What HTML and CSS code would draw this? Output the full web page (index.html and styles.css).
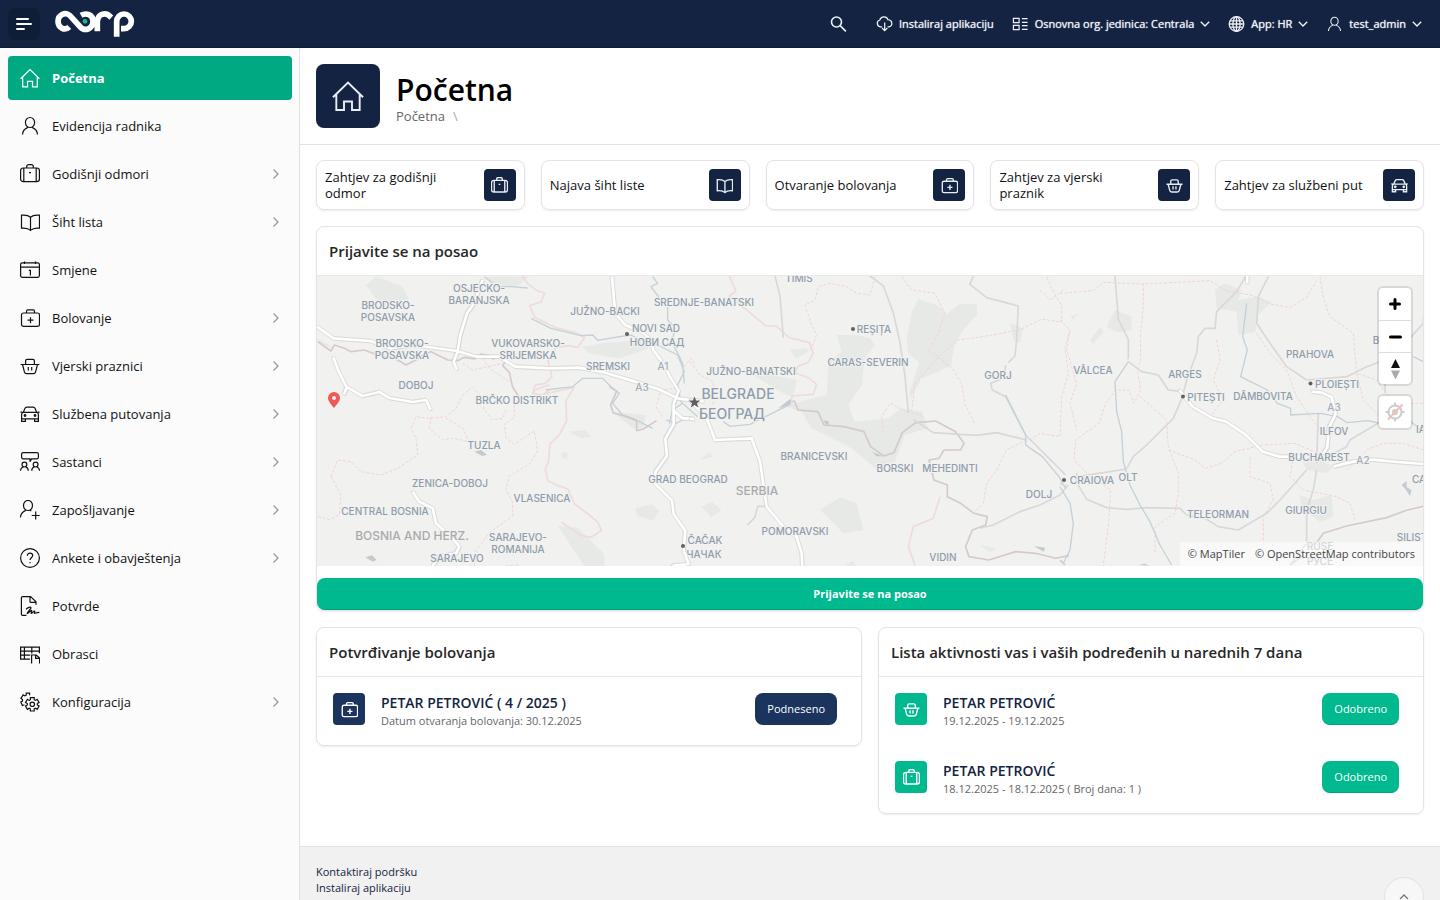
FILE: index.html
```html
<!DOCTYPE html>
<html lang="hr">
<head>
<meta charset="utf-8">
<title>Početna</title>
<meta name="viewport" content="width=device-width, initial-scale=1">
<link rel="stylesheet" href="styles.css">
</head>
<body>
<svg class="sprite" aria-hidden="true">
  <symbol id="i-home" viewBox="0 0 20 20"><path d="M.6 10.8 10 1.6l9.4 9.2M2.7 8.8v10h4.8v-5.4h5v5.4h4.8v-10"/></symbol>
  <symbol id="i-user" viewBox="0 0 20 20"><ellipse cx="10" cy="6.5" rx="4.6" ry="5"/><path d="M2.5 18.6c0-4.2 2-5.6 5.4-7.2M17.5 18.6c0-4.2-2-5.6-5.4-7.2"/></symbol>
  <symbol id="i-case" viewBox="0 0 20 20"><rect x=".6" y="4" width="18.8" height="13.6" rx="2.6"/><path d="M3.8 4v13.6M16.2 4v13.6M6.7 4V2.6a2 2 0 0 1 2-2h2.6a2 2 0 0 1 2 2V4M9 8.6h2"/></symbol>
  <symbol id="i-book" viewBox="0 0 20 20"><path d="M1.5 3.2c3.4-.4 7 .2 9 2 2-1.8 5.5-2.4 9-2v13c-3.5-.4-7 .2-9 2.2-2-2-5.6-2.6-9-2.2zM10.5 5.2v13"/></symbol>
  <symbol id="i-cal" viewBox="0 0 20 20"><rect x=".6" y="2.8" width="18.8" height="14.5" rx="1.8"/><path d="M.6 7.2h18.8M4.500 1.400V4M15.500 1.400V4M8.800 10.400h1.600v5"/></symbol>
  <symbol id="i-aid" viewBox="0 0 20 20"><rect x="1.500" y="5" width="18" height="13.400" rx="2"/><path d="M6.500 5V3.400c0-.9.500-1.500 1.400-1.500h5.200c.9 0 1.400.6 1.400 1.500V5M10.500 9.200v6M7.500 12.200h6"/></symbol>
  <symbol id="i-basket" viewBox="0 0 20 20"><path d="M.6 8.500h18.800M2.500 8.500l1.900 7.300c.3 1.200 1 1.900 2.200 1.900h6.800c1.200 0 1.900-.7 2.200-1.900l1.900-7.300M5.600 8.500V5c0-1 .7-1.700 1.700-1.700h5.400c1 0 1.700.7 1.700 1.700v3.500M8.300 11v3.600M11.700 11v3.600"/></symbol>
  <symbol id="i-car" viewBox="0 0 20 20"><path d="M.4 8.200h1.800M17.800 8.200h1.800M3.200 8.400 5 4.300c.4-.8.900-1.200 1.700-1.200h6.600c.8 0 1.300.4 1.700 1.200l1.800 4.100zM3.200 8.400C2 8.800 1.600 9.500 1.600 10.600v6.800h3.800v-2.600h9.200v2.600h3.800v-6.800c0-1.100-.4-1.800-1.600-2.200M1.600 14.800h3.800M14.600 14.800h3.800"/><circle cx="5" cy="11.500" r=".8"/><circle cx="15" cy="11.500" r=".8"/></symbol>
  <symbol id="i-meet" viewBox="0 0 20 20"><path d="M3.200.7h13.600c1 0 1.600.6 1.600 1.600v3c0 1-.6 1.600-1.600 1.600h-5.300L10 9.800V6.900H3.200c-1 0-1.600-.6-1.600-1.600v-3c0-1 .6-1.600 1.600-1.600zM.5 18.800c0-2.600.9-3.300 2.700-4.100M8.300 18.800c0-2.600-.9-3.300-2.600-4.100M11.700 18.800c0-2.600.9-3.300 2.600-4.100M19.500 18.800c0-2.600-.9-3.300-2.700-4.100"/><circle cx="4.400" cy="12.600" r="2.400"/><circle cx="15.600" cy="12.600" r="2.400"/></symbol>
  <symbol id="i-plus" viewBox="0 0 20 20"><ellipse cx="8" cy="5.500" rx="4.500" ry="5"/><path d="M.5 17.600c0-4.200 1.700-5.600 5.200-7.200M10 10.200l1.300.8M15.700 11.500v8M11.700 15.500h8"/></symbol>
  <symbol id="i-help" viewBox="0 0 20 20"><circle cx="10" cy="10" r="9.400"/><path d="M7.300 7.700C7.300 6.100 8.400 5.200 10 5.200s2.700.9 2.700 2.400c0 2-2.700 2.300-2.700 4.300M10 14v1.200"/></symbol>
  <symbol id="i-sign" viewBox="0 0 20 20"><path d="M6.500 19.400H2.600c-.8 0-1.200-.4-1.200-1.200V1.800c0-.8.400-1.200 1.200-1.200h8l5.400 5.200v3M10 1v4.400c0 .6.300.9.900.9h4.600M6 13.400c1.800-2 4.600-2.800 5-1.800.3.900-3.800 5-3.800 5.800s3.400-3 4.300-3-.9 3-.2 3 2.300-2.400 3.200-2.400-.7 2.200 0 2.400 3-1.400 4.900-1"/></symbol>
  <symbol id="i-form" viewBox="0 0 20 20"><path d="M10 15.200H.6v-12h18.800v6M.6 7.200h18.800M.6 11.200h9.600M4.400 3.200v12M11.800 3.200v6.200M11.600 19.600V11h4.600l3.400 3v5.600M15.600 11v3.400h4"/></symbol>
  <symbol id="i-gear" viewBox="0 0 20 20"><path d="M10.400 5.600h3.800v2.100l1.200.7 1.800-1.100 1.900 3.300-1.800 1v1.400l1.800 1-1.900 3.300-1.800-1.100-1.200.7V19h-3.800v-2.100l-1.200-.7-1.800 1.100L5.500 14l1.800-1v-1.400l-1.800-1 1.900-3.300 1.800 1.100 1.200-.7zM9.600 3.300V1.200H6.200v2l-1.300.7L3.200 2.900.9 6.300l1.600 1.200v1.600l-1.700 1 1.600 3.400 2-.7"/><circle cx="12.300" cy="12.300" r="2.200"/></symbol>
  <symbol id="i-right" viewBox="0 0 8 12"><path d="m1.500 1.500 4.500 4.500-4.500 4.500"/></symbol>
  <symbol id="i-down" viewBox="0 0 10 8"><path d="m.8 1.800 4.200 4.200 4.200-4.200"/></symbol>
  <symbol id="i-search" viewBox="0 0 16 16"><circle cx="6" cy="6" r="5"/><path d="m9.600 9.600 5.800 5.800"/></symbol>
  <symbol id="i-cloud" viewBox="0 0 18 16"><path d="M6.400 11H4.600A3.700 3.700 0 0 1 4 3.800 4.600 4.600 0 0 1 12.800 3.500a3.800 3.800 0 0 1 1 7.500h-1.600M9.200 6.500v8.300M6.400 12.300l2.800 2.700 2.800-2.700"/></symbol>
  <symbol id="i-org" viewBox="0 0 18 16"><path d="M1.500 2h6v4.500h-6zM1.500 9.500h6V14h-6zM10.500 2.300h6M10.500 6.300h6M10.500 9.800h6M10.500 13.700h6"/></symbol>
  <symbol id="i-globe" viewBox="0 0 16 16"><circle cx="8" cy="8" r="7.300"/><ellipse cx="8" cy="8" rx="3.600" ry="7.300"/><path d="M8 .7v14.600M1.600 4.800h12.800M.7 8h14.600M1.600 11.200h12.800"/></symbol>
</svg>

<header class="topbar">
  <button class="menu-button" type="button" aria-label="Izbornik">
    <svg viewBox="0 0 16 14"><path d="M1 2h11M1 7h14M1 12h7"/></svg>
  </button>
  <a class="brand" href="#" aria-label="Početna stranica">
    <svg viewBox="160 30 243 84"><path d="M206 81C192 94 172 83 172 64c0-19 21-30 36-17l31 34c14 15 38 5 38-17 0-20-20-27-36-18M290 94V66c0-20 17-29 32-22l10 9M348 110V64c0-12 10-22 22-22s22 10 22 22-10 22-22 22h-9"/><circle cx="253" cy="64" r="7"/></svg>
  </a>
  <nav class="tools" aria-label="Alati">
    <button class="tool search" type="button" aria-label="Traži"><svg><use href="#i-search"/></svg></button>
    <button class="tool" type="button"><svg><use href="#i-cloud"/></svg>Instaliraj aplikaciju</button>
    <button class="tool" type="button"><svg><use href="#i-org"/></svg>Osnovna org. jedinica: Centrala<svg class="down"><use href="#i-down"/></svg></button>
    <button class="tool" type="button"><svg><use href="#i-globe"/></svg>App: HR<svg class="down"><use href="#i-down"/></svg></button>
    <button class="tool" type="button"><svg><use href="#i-user"/></svg>test_admin<svg class="down"><use href="#i-down"/></svg></button>
  </nav>
</header>

<div class="shell">
  <nav class="sidebar" aria-label="Glavni izbornik">
    <a class="nav-item active" href="#"><svg class="icon"><use href="#i-home"/></svg><span>Početna</span></a>
    <a class="nav-item" href="#"><svg class="icon"><use href="#i-user"/></svg><span>Evidencija radnika</span></a>
    <a class="nav-item" href="#"><svg class="icon"><use href="#i-case"/></svg><span>Godišnji odmori</span><svg class="right"><use href="#i-right"/></svg></a>
    <a class="nav-item" href="#"><svg class="icon"><use href="#i-book"/></svg><span>Šiht lista</span><svg class="right"><use href="#i-right"/></svg></a>
    <a class="nav-item" href="#"><svg class="icon"><use href="#i-cal"/></svg><span>Smjene</span></a>
    <a class="nav-item" href="#"><svg class="icon"><use href="#i-aid"/></svg><span>Bolovanje</span><svg class="right"><use href="#i-right"/></svg></a>
    <a class="nav-item" href="#"><svg class="icon"><use href="#i-basket"/></svg><span>Vjerski praznici</span><svg class="right"><use href="#i-right"/></svg></a>
    <a class="nav-item" href="#"><svg class="icon"><use href="#i-car"/></svg><span>Službena putovanja</span><svg class="right"><use href="#i-right"/></svg></a>
    <a class="nav-item" href="#"><svg class="icon"><use href="#i-meet"/></svg><span>Sastanci</span><svg class="right"><use href="#i-right"/></svg></a>
    <a class="nav-item" href="#"><svg class="icon"><use href="#i-plus"/></svg><span>Zapošljavanje</span><svg class="right"><use href="#i-right"/></svg></a>
    <a class="nav-item" href="#"><svg class="icon"><use href="#i-help"/></svg><span>Ankete i obavještenja</span><svg class="right"><use href="#i-right"/></svg></a>
    <a class="nav-item" href="#"><svg class="icon"><use href="#i-sign"/></svg><span>Potvrde</span></a>
    <a class="nav-item" href="#"><svg class="icon"><use href="#i-form"/></svg><span>Obrasci</span></a>
    <a class="nav-item" href="#"><svg class="icon"><use href="#i-gear"/></svg><span>Konfiguracija</span><svg class="right"><use href="#i-right"/></svg></a>
  </nav>

  <main class="main">
    <div class="page-head">
      <div class="page-icon"><svg><use href="#i-home"/></svg></div>
      <div class="page-title">
        <h1>Početna</h1>
        <p class="crumbs"><a href="#">Početna</a><span>\</span></p>
      </div>
    </div>

    <div class="content">
      <div class="shortcuts">
        <a class="shortcut" href="#"><span>Zahtjev za godišnji odmor</span><span class="tile"><svg><use href="#i-case"/></svg></span></a>
        <a class="shortcut" href="#"><span>Najava šiht liste</span><span class="tile"><svg><use href="#i-book"/></svg></span></a>
        <a class="shortcut" href="#"><span>Otvaranje bolovanja</span><span class="tile"><svg><use href="#i-aid"/></svg></span></a>
        <a class="shortcut" href="#"><span>Zahtjev za vjerski praznik</span><span class="tile"><svg><use href="#i-basket"/></svg></span></a>
        <a class="shortcut" href="#"><span>Zahtjev za službeni put</span><span class="tile"><svg><use href="#i-car"/></svg></span></a>
      </div>

      <section class="card">
        <h2>Prijavite se na posao</h2>
        <div class="map">
          <svg class="map-canvas" viewBox="317 276 1106 290" preserveAspectRatio="xMidYMid slice" role="img" aria-label="Karta">
            <g transform="translate(316 270) scale(.3333)">
              <path class="land" d="M150 45l30-25 80 30 20 40-30 20-60-10zM5 205l50 30-50-15zM800 230l60-10 110-10 30 25-90 30-90-15zM510 20h130l-40 30-70-5zM725 768l60 5 80 80v35h-60zM958 715l50-12 22 20-20 30-48-18zM757 485l50-5 20 20-30 5zM890 425l100 10-10 40-30 0zM738 545l18 5-5 18-15-8z"/>
              <path class="lake" d="M475 545l20-5 18 14-14 4zM148 862l20-6 14 14-12 5z"/>
              <path class="border" d="M5 215l40 28 10-18 30 10 20 10 40-5 40 15 60 15 25 15 40-20 10-10 25-10 20 10 30 15 30 2 20-10 30 5 20-15 25 5 10 10 20-5 20 10-10 15 20 20 10 45 20 30"/>
              <path class="border soft" d="M620 18l14 22 26 20 26 10-10 25-35 12 15 35 60 30 60 15 30 15-20 30-30-5-35 5-25 40 12 48-20 20-30 5-8 25 30 5 20-15M700 375l-50 10 5-25 45-15M685 372l90-20-25 40 2 60-20 40-30 30-4 50-10 25 8 35 30 15 30 10 20 45 40 30 30 25 10 25-30 20-30-5-60-40"/>
              <path class="region" d="M45 620l20-50 40 5 30 30 60 10 50-20 60-40-5-50-15-30 15-35 40 5 50-5 30-25 20-40 30-25 25 30 10 40 25 30 30-5 10-25M345 440l-5 35 40 35 30-5 50 10-20-40-50-30M500 265l20 30 60 40M440 280l30 20 90-20M45 620l30 55-5 60-30 14-36-10M475 888l5-45 40-55 70-50 0-40-20-40 10-40 60-35 25-40-10-60-60 40-25-20-5-40 30-20 0-50M1040 440l-20-30 15-50 50-5M1105 290l20-25 15 20M570 888l40-4"/>
              <path class="river" d="M505 20l40 30 40 0 50 4M645 145l60 30 90 22 35-2 15 16 60-10 40-6 40 20 40 10 60 30 20 50-20 40 10 50 50 45M1010 20l15 20-20 10 30 40 20 20 0 40 20 20-5 50 30 60 5 60M690 360l80-10 30-25 60 0 25 25 25 20-20 30 30 35 30 10 60 30M1060 460l10-40 30-20M1050 450l30 10 20-10"/>
              <path class="border" d="M880 350l22 14-18 40 8 25 30 8 40 15 0 30 20-5 40-25"/>
              <path class="road" d="M3 170l50 35 110 8 60 22 70-10 130 18 60 17 65 0 50 30 110 5 80-2 80 15 100 30 60 20 60 28 75 8M425 245l8-50 20-65 22-30 10-30 15-40M425 245l-12 30 10 25M52 262l15 40 25 50-8 22M90 350l50 28 50-12 30 18 70 12 40-6 14 30M888 20l10 110 30 35 50 22 25 20 10 35 30 40 20 40 25 40-15 40 0 60-25 45 5 50-35 50 0 35 50 50 5 40 35 50-5 60 15 40-45 5-10 10M1070 420l30 25 30 0M290 665l20 30 40 20 10 45 50 45 20 25-10 20-50 10-20 28"/>
            </g>
            <g transform="translate(690 270) scale(.3333)">
              <path class="land" d="M685 87l60 20 25 25 40-30 50 0 3 30-45 50-25 45-10 60-90 40-30 60-5-20 30-90-33-25-5-45 15-80zM500 195l40 10 15 20-30 40-10 80-40 60 20 50 100-10 40-30 60 10 20 50-70 20-30 80-60 20-70-60-60-30-60-30-30-50-50-15 60-20 65-15 5-100 40-30-15-50zM320 330l-10 50-30-10-100-60 40 0zM960 160l40 15-10 45-20-10zM390 720l60-38 50 18 20 80-60 10-30-30zM35 710l30-15 30 25-30 22zM300 240l50-5 5 10-35 20zM30 570l30-25 8 15zM460 885l30-12 8 14zM870 825l50 10-20 12z"/>
              <path class="lake" d="M265 415l35-28 12 8-20 14zM400 450l18 5-8 14zM1032 828l34 5-5 12zM545 545l35 14-20 0z"/>
              <path class="border" d="M312 390l12 30 60 5 18 40 60 5 60 15 20 45 40 28 30-10 25-60 40-30 60-5 60 32 25 35-10 20-50 0-15 25-30 5 15 60 40 15 0 35 40 20 40 30 40 10-5 25-40 15-20 50 10 30 60 10 80-25 60 5 60 15 40-8"/>
              <path class="border soft" d="M118 18l20 45-20 15 50 40 60 50 30 0 40 35 60 15 12 30-15 30-30 10-10 20 40 15 25 20-10 30-65 5 0 30M750 680l-20 65-60 25-15 60 20 55"/>
              <path class="region" d="M555 20l-15 55-40-5-30-20-50-10-35 10-10 40-30 15 20 60 15 30-20 50M0 275l30 40 40 20 0 70M635 20l30 40 70 10 30 60-20 60-30 50 30 20 60-50 60-8 60-10 70-15 60-30 60 10 0-50-30-50-20-50M745 262l-70 80-10 80M745 262l40 30 30 50 10 60 30 60M580 490l-5-50 25-40 40 20 60 20M1010 510l-60 30-30 60-30 40-10 60-30 30M1020 510l30-20 60 10 5-120 20-70-10-80 15-50M1050 60l30 30 40-30"/>
              <path class="way" d="M255 18l15 60 10 125M540 18l40 30 30 80 20 90 15 100 10 110M850 18l-10 25 50 40 95 25-5 100-5 50-20 20M947 285l-5 40-40 15 5 20 40 20 60 115 80 80 40 40M670 448l60 40 130 8 60-8 90 22M870 775l40-10 80-40 60-20 60-30 25-30M232 710l-28-2-10 35-22 22"/>
              <path class="river" d="M947 375l60 120 0 30 50 35 50 60 20 35M100 455l20 14 60-6 60-30 60-30"/>
              <path class="road" d="M0 390l50 55 25 65 110-5 25 70 20 135 50 60 40 30 15 50 2 40M0 445l12 4"/>
            </g>
            <g transform="translate(1060 270) scale(.3333)">
              <path class="land" d="M465 60l30-20 50 20-10 30 60-10 40 15-40 40-10 50-50 10-5-70-60-10zM165 120l50 20 0 40-40 8-35-18zM90 210l30-38 10 15-30 35zM30 140l25-12-15 22zM720 675l40 15 55-15 5 65-40 15-55-40zM720 560l60 10 40 20-20 20-60-10z"/>
              <path class="lake" d="M1025 645l15-12 0 18 15 10-5 18-12-20zM235 885l20-4 12 6z"/>
              <path class="region" d="M0 70l100-8 30-25 120 5 200-10 50 30 80 15 50 25 60 10 50-30 30-50M250 40l0 70-8 80 0 80-10 30 10 60-20 40-15-40-40 0-30 40-20 60-70 50-5 60 40 40 70 50-5 90-20 160M240 380l80 70 5 80 30 80 0 60-10 60-60 40 0 80M470 210l10 60-20 60 30 60-40 50M325 540l80 30 30 25 50-15 40-35 80-20 100-5 70 30M590 190l40 60 50 50 30 80 40 60 50 60 10 40M780 20l10 60 20 60 70 50 10 120 60 20 50 70 90 0M890 310l20 80 50 50M700 560l-10 60 40 40 100 20 40 20 15 50M570 560l0 60 60 20 10 50-30 50 0 80M1090 540l-60-20-60 0-50 20-60 60M0 150l30 30-10 60 30 100-20 60 20 80"/>
              <path class="way" d="M165 18l10 130 30 60 0 60M205 275l40 30 50 10 30 45 40 5M370 375l-30 70-80 80-40 35-20 35M370 370l10-40 30-80 5-50 20-25 30 0 5-50 60-60 30-50M625 20l-30 60-5 80 40 60 50 70 60 40M740 330l120-10 60-30 80-30 90-100 0-15M775 430l-5 150M740 600l-80 90-40 40-85 50-60-10-40-25-55-10-20-20-100-2-60 5-60-5-60-25-30-50 0-30M770 600l-10 60-20 60 0 100-50 65M50 620l100-15 50-8M0 640l20 10M975 340l0 30M970 450l-100 60-10 20-60 30"/>
              <path class="river" d="M205 275l-40 60 5 90 15 60 5 90 20 70 30 60 30 50 30 70 35 60M560 100l-12 100 14 40-20 80 80 40 30 40 40 15 0 20 90-5 50 10 30 18 60-6 50 10 60-25 60 50 50 20M0 650l30 50 10 60-10 80-20 40M1060 260l30 15"/>
              <path class="border" d="M765 825l25-35 70-22 120-25 60-22 50-12M690 885l40-30M0 870l15 15"/>
              <path class="road" d="M358 360l40 50 60 35 40 10 60 40 50 50 50 15 60 0M755 365l30 3 30 14 12 50-20 40-5 60-12 20M820 590l60-15 60-6 60 6 90 7M562 18l0 22"/>
            </g>
            <g class="labels">
              <text x="388" y="309">BRODSKO-</text><text x="388" y="321">POSAVSKA</text>
              <text x="479" y="292">OSJECKO-</text><text x="479" y="304">BARANJSKA</text>
              <text x="402" y="347">BRODSKO-</text><text x="402" y="359">POSAVSKA</text>
              <text x="528" y="347">VUKOVARSKO-</text><text x="528" y="359">SRIJEMSKA</text>
              <text x="605" y="315">JUŽNO-BACKI</text><text x="704" y="306">SREDNJE-BANATSKI</text>
              <text x="656" y="332">NOVI SAD</text><text x="657" y="346">НОВИ САД</text>
              <text x="608" y="370">SREMSKI</text><text x="416" y="389">DOBOJ</text>
              <text x="517" y="404">BRČKO DISTRIKT</text><text x="484" y="449">TUZLA</text>
              <text x="450" y="487">ZENICA-DOBOJ</text><text x="542" y="502">VLASENICA</text>
              <text x="385" y="515">CENTRAL BOSNIA</text>
              <text x="518" y="541">SARAJEVO-</text><text x="518" y="553">ROMANIJA</text>
              <text x="457" y="562">SARAJEVO</text><text x="799" y="282">TIMIS</text>
              <text x="751" y="375">JUŽNO-BANATSKI</text><text x="868" y="366">CARAS-SEVERIN</text>
              <text x="874" y="333">REȘIȚA</text><text x="998" y="379">GORJ</text>
              <text x="814" y="460">BRANICEVSKI</text><text x="895" y="472">BORSKI</text><text x="950" y="472">MEHEDINTI</text>
              <text x="688" y="483">GRAD BEOGRAD</text><text x="795" y="535">POMORAVSKI</text>
              <text x="705" y="544">ČAČAK</text><text x="704" y="558">ЧАЧАК</text>
              <text x="943" y="561">VIDIN</text><text x="1039" y="498">DOLJ</text>
              <text x="1092" y="484">CRAIOVA</text><text x="1128" y="481">OLT</text>
              <text x="1093" y="374">VÂLCEA</text><text x="1185" y="378">ARGES</text>
              <text x="1206" y="401">PITEȘTI</text><text x="1263" y="400">DÂMBOVITA</text>
              <text x="1310" y="358">PRAHOVA</text><text x="1337" y="388">PLOIEȘTI</text>
              <text x="1334" y="435">ILFOV</text><text x="1319" y="461">BUCHAREST</text>
              <text x="1218" y="518">TELEORMAN</text><text x="1306" y="514">GIURGIU</text>
              <text x="1376" y="344">B</text><text x="1421" y="433">IA</text><text x="1419" y="483">CA</text><text x="1412" y="541">SILIST</text>
              <text class="road-label" x="642" y="391">A3</text><text class="road-label" x="663" y="370">A1</text>
              <text class="road-label" x="1334" y="411">A3</text><text class="road-label" x="1363" y="464">A2</text>
              <text class="road-label" x="1320" y="550">RUSE</text><text class="road-label" x="1320" y="565">РУСЕ</text>
              <text class="big" x="738" y="399">BELGRADE</text><text class="big" x="732" y="419">БЕОГРАД</text>
              <text class="country" x="412" y="540">BOSNIA AND HERZ.</text><text class="country" x="757" y="495">SERBIA</text>
            </g>
            <g class="dots"><circle cx="627" cy="334" r="2"/><circle cx="853" cy="329" r="2"/><circle cx="683" cy="546" r="2"/><circle cx="1064" cy="480" r="2"/><circle cx="1183" cy="396.500" r="2"/><circle cx="1310.500" cy="383.500" r="2"/><path d="m694.500 396.500 1.600 4h4.200l-3.300 2.700 1.200 4.200-3.700-2.500-3.700 2.500 1.200-4.200-3.300-2.700h4.200z"/></g>
            <path class="pin" fill-rule="evenodd" d="M334 408c-2.500-3.500-6-6.500-6-10a6 6 0 0 1 12 0c0 3.500-3.500 6.500-6 10zm0-12a2 2 0 1 0 0 4 2 2 0 0 0 0-4z"/>
          </svg>
          <div class="map-tools">
            <div class="map-group">
              <button type="button" aria-label="Uvećaj"><svg viewBox="0 0 32 32"><path class="bar" d="M16 11.500v9M11.500 16h9"/></svg></button>
              <button type="button" aria-label="Umanji"><svg viewBox="0 0 32 32"><path class="bar" d="M11.500 16h10"/></svg></button>
              <button type="button" aria-label="Sjever"><svg viewBox="0 0 32 32"><path d="m12 15 4.500-9 4.500 9z"/><path class="south" d="m12 17.500 4.500 9 4.500-9z"/></svg></button>
            </div>
            <div class="map-group">
              <button type="button" aria-label="Moja lokacija" disabled><svg class="locate" viewBox="0 0 32 32"><circle cx="16" cy="16" r="6.500"/><circle class="core" cx="16" cy="16" r="3"/><path d="M16 6.500v3M16 22.500v3M6.500 16h3M22.500 16h3"/><path class="slash" d="m9 23.500 14.500-15"/></svg></button>
            </div>
          </div>
          <div class="attribution"><a href="#">© MapTiler</a><a href="#">© OpenStreetMap contributors</a></div>
        </div>
        <button class="checkin-button" type="button">Prijavite se na posao</button>
      </section>

      <div class="panels">
        <section class="card">
          <h2>Potvrđivanje bolovanja</h2>
          <div class="entry">
            <span class="tile blue"><svg><use href="#i-aid"/></svg></span>
            <div class="entry-text"><strong>PETAR PETROVIĆ ( 4 / 2025 )</strong><span>Datum otvaranja bolovanja: 30.12.2025</span></div>
            <button class="status blue" type="button">Podneseno</button>
          </div>
        </section>
        <section class="card">
          <h2>Lista aktivnosti vas i vaših podređenih u narednih 7 dana</h2>
          <div class="entry">
            <span class="tile green"><svg><use href="#i-basket"/></svg></span>
            <div class="entry-text"><strong>PETAR PETROVIĆ</strong><span>19.12.2025 - 19.12.2025</span></div>
            <button class="status green" type="button">Odobreno</button>
          </div>
          <div class="entry">
            <span class="tile green"><svg><use href="#i-case"/></svg></span>
            <div class="entry-text"><strong>PETAR PETROVIĆ</strong><span>18.12.2025 - 18.12.2025 ( Broj dana: 1 )</span></div>
            <button class="status green" type="button">Odobreno</button>
          </div>
        </section>
      </div>
    </div>

    <footer class="footer">
      <div class="footer-links">
        <a href="#">Kontaktiraj podršku</a>
        <a href="#">Instaliraj aplikaciju</a>
        <span>Powered by <b>ERPORM</b></span>
      </div>
      <button class="to-top" type="button" aria-label="Na vrh"><svg viewBox="0 0 10 8"><path d="m1 6 4-4 4 4"/></svg></button>
    </footer>
  </main>
</div>
</body>
</html>
```
FILE: styles.css
```css
* { box-sizing: border-box; }

body {
  margin: 0;
  height: 100vh;
  overflow: hidden;
  display: flex;
  flex-direction: column;
  background: #fff;
  color: #111;
  font: 13px/16px "Open Sans", "Noto Sans", sans-serif;
}

h1, h2, p { margin: 0; }
a { color: inherit; text-decoration: none; }
button { font: inherit; color: inherit; border: 0; padding: 0; background: none; cursor: pointer; }
svg { fill: none; stroke: currentColor; display: block; flex: none; }
.sprite { position: absolute; width: 0; height: 0; }

/* Top bar */
.topbar {
  flex: none;
  display: flex;
  align-items: center;
  height: 48px;
  padding: 0 18px 0 8px;
  background: #132341;
  box-shadow: inset 0 -1px #0f1c34;
  color: #eef1f6;
}
.menu-button {
  display: grid;
  place-items: center;
  width: 32px;
  height: 32px;
  border-radius: 8px;
  background: #0f1e37;
}
.menu-button svg { width: 16px; height: 14px; stroke: #fff; stroke-width: 2; stroke-linecap: round; }
.brand { margin-left: 14px; }
.brand svg { width: 81px; height: 28px; stroke: #fff; stroke-width: 17; stroke-linejoin: round; }
.brand circle { fill: #1fb886; stroke: none; }
.tools { display: flex; align-items: center; gap: 18px; margin-left: auto; font-size: 11px; }
.tool { display: flex; align-items: center; gap: 6px; height: 32px; text-shadow: 0 0 1px currentColor; }
.tool svg { width: 17px; height: 16px; stroke-width: 1.3; }
.tool .down { width: 10px; height: 8px; stroke-width: 1.4; }
.search { width: 32px; margin-right: 6px; padding-left: 10px; }
.search svg { stroke-width: 1.6; }

/* Shell */
.shell { flex: 1; min-height: 0; display: flex; }
.sidebar {
  flex: none;
  display: flex;
  flex-direction: column;
  gap: 4px;
  width: 300px;
  padding: 8px 7px 8px 8px;
  background: #fbfbfb;
  border-right: 1px solid #e2e2e2;
}
.nav-item {
  display: flex;
  align-items: center;
  gap: 12px;
  height: 44px;
  padding: 0 12px;
  border-radius: 4px;
}
.nav-item .icon { width: 20px; height: 20px; stroke-width: 1.2; }
.nav-item .right { width: 8px; height: 12px; margin-left: auto; color: #999; stroke-width: 1.3; }
.nav-item.active { background: #00a982; color: #fff; font-weight: 700; }

.main { flex: 1; min-width: 0; overflow: hidden; }
.page-head {
  display: flex;
  align-items: center;
  gap: 16px;
  padding: 16px;
  border-bottom: 1px solid #e2e2e2;
}
.page-icon {
  display: grid;
  place-items: center;
  width: 64px;
  height: 64px;
  border-radius: 8px;
  background: #132341;
  color: #e9edf5;
}
.page-icon svg { width: 32px; height: 32px; stroke-width: 1.2; }
.page-title { padding-top: 4px; }
h1 { color: #000; font-size: 30px; line-height: 36px; font-weight: 600; }
.crumbs { display: flex; gap: 8px; color: #666; }
.crumbs span { color: #aaa; }

.content { display: flex; flex-direction: column; gap: 16px; padding: 15px 16px 32px; }

/* Shortcuts */
.shortcuts { display: grid; grid-template-columns: repeat(5, 1fr); gap: 16px; }
.shortcut {
  display: flex;
  align-items: center;
  justify-content: space-between;
  gap: 12px;
  min-height: 50px;
  padding: 8px;
  border: 1px solid #e4e4e4;
  border-radius: 8px;
  box-shadow: 0 1px 2px rgba(0, 0, 0, .08);
}
.tile {
  flex: none;
  display: grid;
  place-items: center;
  width: 32px;
  height: 32px;
  border-radius: 4px;
  background: #132341;
  color: #e9edf5;
}
.tile svg { width: 17px; height: 17px; stroke-width: 1.6; }

/* Cards */
.card {
  border: 1px solid #e4e4e4;
  border-radius: 8px;
  box-shadow: 0 1px 2px rgba(0, 0, 0, .08);
}
.card h2 {
  padding: 12px;
  border-bottom: 1px solid #e8e8e8;
  color: #262626;
  font-size: 15px;
  line-height: 24px;
  font-weight: 600;
}
.checkin-button {
  display: block;
  width: 100%;
  height: 32px;
  margin-top: 12px;
  border-radius: 8px;
  border-bottom: 1px solid #00a27d;
  background: #00b98f;
  color: #fff;
  font-size: 11px;
  font-weight: 700;
}
.panels { display: grid; grid-template-columns: 1fr 1fr; align-items: start; gap: 16px; }
.entry { display: flex; align-items: flex-start; gap: 16px; padding: 16px 24px 16px 16px; }
.entry-text { display: flex; flex-direction: column; }
.entry-text strong { color: #132341; font-size: 14px; font-weight: 600; line-height: 20px; }
.entry-text span { color: #666; font-size: 11px; }
.status {
  height: 32px;
  margin-left: auto;
  padding: 0 12px;
  border-radius: 8px;
  color: #fff;
  font-size: 11px;
}
.blue { background: #1a345d; color: #fff; }
.green { background: #00b98f; color: #fff; }
.status.green { border-bottom: 1px solid #00a27d; }

/* Map */
.map { position: relative; height: 290px; overflow: hidden; background: #f1f2f0; }
.map-canvas { width: 100%; height: 100%; }
.land { fill: #e6e9e6; stroke: none; }
.lake { fill: #c3cbce; stroke: none; }
.border { stroke: #d6c9cd; stroke-width: 5; stroke-linejoin: round; }
.border.soft { stroke: #efdadd; stroke-width: 5; }
.region { stroke: #f2d2d5; stroke-width: 3; stroke-dasharray: 9 5; stroke-linejoin: round; }
.river { stroke: #c4d1d7; stroke-width: 4; stroke-linejoin: round; }
.way { stroke: #d8d8d8; stroke-width: 5; stroke-linejoin: round; }
.road { stroke: #fff; stroke-width: 8; stroke-linejoin: round; filter: drop-shadow(2px 2px 1px #d0d0d0) drop-shadow(-2px -2px 1px #d0d0d0); }
.labels text {
  fill: #8f9cab;
  stroke: #f1f2f0;
  stroke-width: 2px;
  paint-order: stroke;
  font: 500 10px/12px Inter, "Noto Sans", sans-serif;
  text-anchor: middle;
}
.labels .road-label { fill: #a5adbb; }
.labels .big { font-size: 14px; }
.labels .country { fill: #a9aaac; font-size: 12px; }
.dots { fill: #5f6062; stroke: none; }
.pin { fill: #ee5a55; stroke: none; }
.map-tools { position: absolute; top: 12px; right: 12px; display: flex; flex-direction: column; gap: 12px; }
.map-group {
  display: flex;
  flex-direction: column;
  width: 32px;
  border-radius: 4px;
  background: #fff;
  box-shadow: 0 0 0 2px rgba(0, 0, 0, .1);
}
.map-group button { width: 32px; height: 32px; }
.map-group button + button { border-top: 1px solid #ddd; }
.map-group svg { width: 32px; height: 32px; fill: #111; stroke: none; }
.map-group .bar { stroke: #000; stroke-width: 3; stroke-linecap: round; }
.map-group .south { fill: #aaa; }
.map-group .locate { fill: none; stroke: #ccc; stroke-width: 2; }
.map-group .core { fill: #ccc; stroke: none; }
.map-group .slash { stroke: #f4bfb8; }
.attribution {
  position: absolute;
  right: 0;
  bottom: 0;
  display: flex;
  gap: 10px;
  padding: 4px 8px;
  background: rgba(255, 255, 255, .5);
  color: #444;
  font-size: 11px;
}

/* Footer */
.footer {
  display: flex;
  justify-content: space-between;
  padding: 17px 16px;
  min-height: 100px;
  background: #f1f1f1;
  border-top: 1px solid #e2e2e2;
  color: #132341;
  font-size: 11px;
}
.footer-links { display: flex; flex-direction: column; }
.footer b { color: #000; }
.to-top {
  display: grid;
  place-items: center;
  width: 40px;
  height: 40px;
  margin-top: 13px;
  border: 1px solid #e2e2e2;
  border-radius: 50%;
  background: #f7f7f7;
  color: #777;
}
.to-top svg { width: 10px; height: 8px; stroke-width: 1.3; }
```
